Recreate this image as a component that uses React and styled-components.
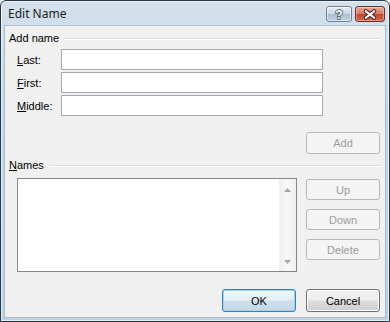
import React from "react";
import styled, { createGlobalStyle } from "styled-components";

const GlobalStyle = createGlobalStyle`
  html, body {
    margin: 0;
    padding: 0;
    background: #ffffff;
  }
  * {
    box-sizing: border-box;
  }
`;

function HelpGlyph() {
  return (
    <svg width="25" height="15" viewBox="0 0 25 15">
      <text
        x="12.5"
        y="12.5"
        textAnchor="middle"
        fontFamily="Liberation Sans, sans-serif"
        fontWeight="700"
        fontSize="13"
        fill="#ffffff"
        stroke="#3b4d5e"
        strokeWidth="1.6"
        paintOrder="stroke"
      >
        ?
      </text>
    </svg>
  );
}

function CloseGlyph() {
  return (
    <svg width="29" height="15" viewBox="0 0 29 15">
      <path d="M10 4 L19 11 M19 4 L10 11" stroke="#4a1a12" strokeWidth="4" strokeLinecap="round" />
      <path d="M10 4 L19 11 M19 4 L10 11" stroke="#ffffff" strokeWidth="2" strokeLinecap="round" />
    </svg>
  );
}

function ScrollArrow({ down }) {
  return (
    <svg width="7" height="4" viewBox="0 0 7 4">
      <path d={down ? "M0 0 L7 0 L3.5 4 Z" : "M0 4 L7 4 L3.5 0 Z"} fill="#a6a6a6" />
    </svg>
  );
}

function Field({ access, rest }) {
  return (
    <>
      <Label>
        <u>{access}</u>
        {rest}
      </Label>
      <Input />
    </>
  );
}

function App() {
  return (
    <>
      <GlobalStyle />
      <Window>
        <TitleBar>
          <Title>Edit Name</Title>
          <CaptionButtons>
            <HelpButton>
              <HelpGlyph />
            </HelpButton>
            <CloseButton>
              <CloseGlyph />
            </CloseButton>
          </CaptionButtons>
        </TitleBar>
        <Client>
          <GroupHeader top={5}>
            <GroupLabel>Add name</GroupLabel>
            <GroupLine />
          </GroupHeader>
          <Fields>
            <Field access="L" rest="ast:" />
            <Field access="F" rest="irst:" />
            <Field access="M" rest="iddle:" />
          </Fields>
          <AddRow>
            <Button disabled height={22}>Add</Button>
          </AddRow>
          <GroupHeader top={4}>
            <GroupLabel>
              <u>N</u>ames
            </GroupLabel>
            <GroupLine />
          </GroupHeader>
          <NamesRow>
            <ListBox>
              <ListArea />
              <ScrollBar>
                <ScrollArrow />
                <ScrollArrow down />
              </ScrollBar>
            </ListBox>
            <SideButtons>
              <Button disabled>Up</Button>
              <Button disabled>Down</Button>
              <Button disabled>Delete</Button>
            </SideButtons>
          </NamesRow>
          <Footer>
            <Button primary height={23}>OK</Button>
            <Button height={23}>Cancel</Button>
          </Footer>
        </Client>
      </Window>
    </>
  );
}

export default App;

const Window = styled.div`
  width: 390px;
  height: 322px;
  display: flex;
  flex-direction: column;
  border: 1px solid #22384a;
  border-radius: 6px 6px 0 0;
  background: linear-gradient(180deg, #d3e1ec 0%, #c4d7e5 40%, #bdd2e1 100%);
  box-shadow: inset 0 0 0 1px rgba(255, 255, 255, 0.6);
  overflow: hidden;
`;

const TitleBar = styled.div`
  height: 24px;
  display: flex;
  align-items: flex-start;
  padding: 0 4px 0 7px;
  flex-shrink: 0;
`;

const Title = styled.div`
  font-family: "Noto Sans", "Open Sans", sans-serif;
  font-size: 12px;
  line-height: 14px;
  margin-top: 6px;
  color: #1c1c1c;
  flex: 1;
`;

const CaptionButtons = styled.div`
  display: flex;
  gap: 3px;
  margin-top: 5px;
`;

const HelpButton = styled.div`
  width: 26px;
  height: 16px;
  display: flex;
  align-items: center;
  justify-content: center;
  border: 1px solid #6d8296;
  border-radius: 3px;
  background: linear-gradient(180deg, #e6eef5 0%, #c9d8e5 48%, #a9bfd2 52%, #bfd3e3 100%);
  box-shadow: inset 0 0 0 1px rgba(255, 255, 255, 0.5);
`;

const CloseButton = styled.div`
  width: 30px;
  height: 16px;
  display: flex;
  align-items: center;
  justify-content: center;
  border: 1px solid #6b2f24;
  border-radius: 3px;
  background: linear-gradient(180deg, #e9a99a 0%, #d77a62 48%, #c2452b 52%, #d5684c 100%);
  box-shadow: inset 0 0 0 1px rgba(255, 255, 255, 0.35);
`;

const Client = styled.div`
  flex: 1;
  margin: 0 3px 3px 3px;
  border: 1px solid #a9bccb;
  background: #f0f0f0;
  display: flex;
  flex-direction: column;
  padding: 0 5px 0 4px;
  font-family: "Liberation Sans", Arial, sans-serif;
  font-size: 11px;
  color: #000000;
`;

const GroupHeader = styled.div`
  display: flex;
  align-items: center;
  height: 14px;
  margin-top: ${(p) => p.top ?? 4}px;
`;

const GroupLabel = styled.div`
  white-space: nowrap;
  margin-right: 6px;
  line-height: 14px;
`;

const GroupLine = styled.div`
  flex: 1;
  height: 2px;
  border-top: 1px solid #d5dfe5;
  border-bottom: 1px solid #ffffff;
  margin-top: 1px;
`;

const Fields = styled.div`
  display: grid;
  grid-template-columns: 44px 262px;
  grid-auto-rows: 21px;
  row-gap: 2px;
  align-items: center;
  margin-top: 4px;
  padding-left: 8px;
`;

const Label = styled.div`
  line-height: 14px;
`;

const Input = styled.div`
  height: 21px;
  background: #ffffff;
  border: 1px solid #a4a9b0;
`;

const AddRow = styled.div`
  display: flex;
  justify-content: flex-end;
  margin-top: 16px;
`;

const Button = styled.div`
  width: 74px;
  height: ${(p) => p.height ?? 21}px;
  display: flex;
  align-items: center;
  justify-content: center;
  border-radius: 3px;
  border: 1px solid ${(p) => (p.disabled ? "#b5b9bc" : p.primary ? "#3c7fb1" : "#707070")};
  color: ${(p) => (p.disabled ? "#9d9d9d" : "#000000")};
  background: ${(p) =>
    p.disabled
      ? "#f4f4f4"
      : p.primary
      ? "linear-gradient(180deg, #f4f8fb 0%, #e3edf5 48%, #cfe0ec 52%, #c2d7e6 100%)"
      : "linear-gradient(180deg, #f2f2f2 0%, #ebebeb 48%, #dddddd 52%, #cfcfcf 100%)"};
  box-shadow: ${(p) =>
    p.disabled ? "none" : p.primary ? "inset 0 0 0 1px #9fd5f2" : "inset 0 0 0 1px #fcfcfc"};
`;

const NamesRow = styled.div`
  display: flex;
  margin-top: 6px;
  padding-left: 8px;
`;

const ListBox = styled.div`
  width: 280px;
  height: 94px;
  display: flex;
  background: #ffffff;
  border: 1px solid #828790;
`;

const ListArea = styled.div`
  flex: 1;
`;

const ScrollBar = styled.div`
  width: 17px;
  display: flex;
  flex-direction: column;
  justify-content: space-between;
  align-items: center;
  padding: 9px 0 7px;
  background: linear-gradient(90deg, #eeeeee 0%, #f7f7f7 50%, #eeeeee 100%);
`;

const SideButtons = styled.div`
  margin-left: auto;
  padding-top: 1px;
  display: flex;
  flex-direction: column;
  gap: 9px;
`;

const Footer = styled.div`
  display: flex;
  justify-content: flex-end;
  gap: 10px;
  margin-top: 17px;
`;
